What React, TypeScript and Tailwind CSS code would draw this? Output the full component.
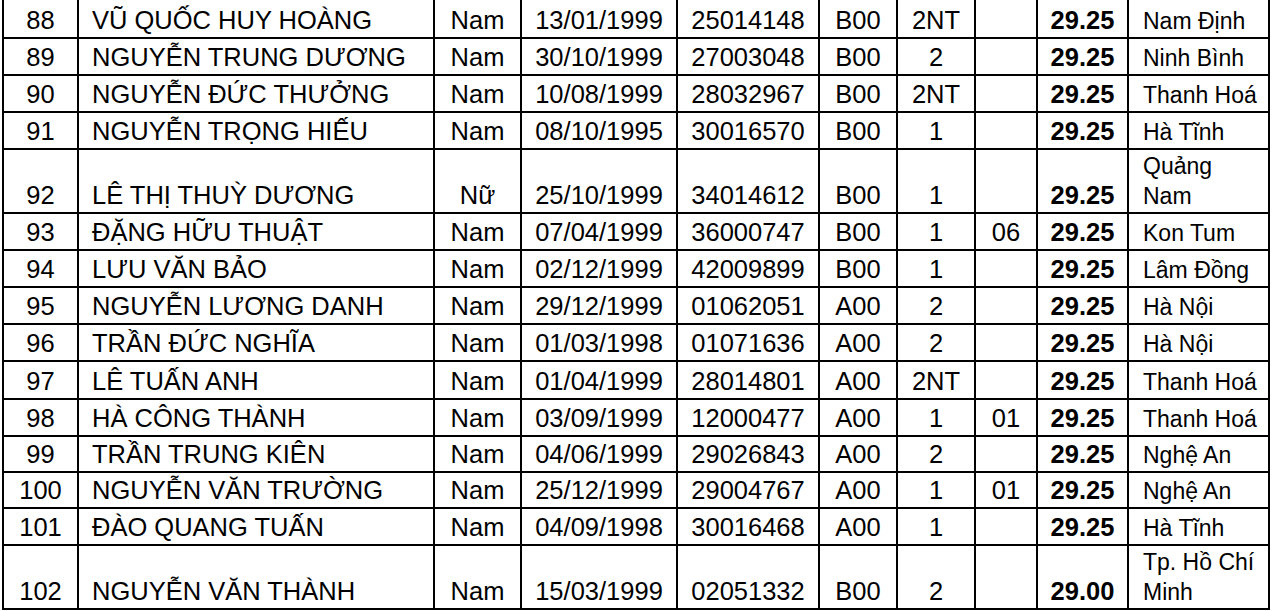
import React from "react";

type Row = {
  h: string;
  cells: string[];
};

const rows: Row[] = [
  { h: "h-[39px]", cells: ["88", "VŨ QUỐC HUY HOÀNG", "Nam", "13/01/1999", "25014148", "B00", "2NT", "", "29.25", "Nam Định"] },
  { h: "h-[37px]", cells: ["89", "NGUYỄN TRUNG DƯƠNG", "Nam", "30/10/1999", "27003048", "B00", "2", "", "29.25", "Ninh Bình"] },
  { h: "h-[37px]", cells: ["90", "NGUYỄN ĐỨC THƯỞNG", "Nam", "10/08/1999", "28032967", "B00", "2NT", "", "29.25", "Thanh Hoá"] },
  { h: "h-[37px]", cells: ["91", "NGUYỄN TRỌNG HIẾU", "Nam", "08/10/1995", "30016570", "B00", "1", "", "29.25", "Hà Tĩnh"] },
  { h: "h-[64px]", cells: ["92", "LÊ THỊ THUỲ DƯƠNG", "Nữ", "25/10/1999", "34014612", "B00", "1", "", "29.25", "Quảng Nam"] },
  { h: "h-[37px]", cells: ["93", "ĐẶNG HỮU THUẬT", "Nam", "07/04/1999", "36000747", "B00", "1", "06", "29.25", "Kon Tum"] },
  { h: "h-[37px]", cells: ["94", "LƯU VĂN BẢO", "Nam", "02/12/1999", "42009899", "B00", "1", "", "29.25", "Lâm Đồng"] },
  { h: "h-[37px]", cells: ["95", "NGUYỄN LƯƠNG DANH", "Nam", "29/12/1999", "01062051", "A00", "2", "", "29.25", "Hà Nội"] },
  { h: "h-[37px]", cells: ["96", "TRẦN ĐỨC NGHĨA", "Nam", "01/03/1998", "01071636", "A00", "2", "", "29.25", "Hà Nội"] },
  { h: "h-[38px]", cells: ["97", "LÊ TUẤN ANH", "Nam", "01/04/1999", "28014801", "A00", "2NT", "", "29.25", "Thanh Hoá"] },
  { h: "h-[37px]", cells: ["98", "HÀ CÔNG THÀNH", "Nam", "03/09/1999", "12000477", "A00", "1", "01", "29.25", "Thanh Hoá"] },
  { h: "h-[36px]", cells: ["99", "TRẦN TRUNG KIÊN", "Nam", "04/06/1999", "29026843", "A00", "2", "", "29.25", "Nghệ An"] },
  { h: "h-[36px]", cells: ["100", "NGUYỄN VĂN TRƯỜNG", "Nam", "25/12/1999", "29004767", "A00", "1", "01", "29.25", "Nghệ An"] },
  { h: "h-[37px]", cells: ["101", "ĐÀO QUANG TUẤN", "Nam", "04/09/1998", "30016468", "A00", "1", "", "29.25", "Hà Tĩnh"] },
  { h: "h-[64px]", cells: ["102", "NGUYỄN VĂN THÀNH", "Nam", "15/03/1999", "02051332", "B00", "2", "", "29.00", "Tp. Hồ Chí Minh"] },
];

const cellAlign = [
  "justify-center text-[25.5px] leading-[27px] pb-[3px]",
  "justify-start pl-[13px] text-[25.5px] leading-[27px] pb-[3px]",
  "justify-center text-[25.5px] leading-[27px] pb-[3px]",
  "justify-center text-[25.5px] leading-[27px] pb-[3px]",
  "justify-center text-[25.5px] leading-[27px] pb-[3px]",
  "justify-center text-[25.5px] leading-[27px] pb-[3px]",
  "justify-center text-[25.5px] leading-[27px] pb-[3px]",
  "justify-center text-[25.5px] leading-[27px] pb-[3px]",
  "justify-center font-bold text-[25.5px] leading-[27px] pb-[3px]",
  "justify-start pl-[14px] pr-[4px] text-[23px] leading-[30px] pb-[1px]",
];

export default function App() {
  return (
    <div className="min-h-[611px] w-[1272px] bg-white text-black" style={{ fontFamily: '"Liberation Sans", Arial, sans-serif' }}>
      <div className="ml-[2px] w-[1268px] border-l-2 border-black">
        {rows.map((r, i) => (
          <div
            key={i}
            className={`grid grid-cols-[75px_356px_87px_156px_142px_78px_78px_62px_91px_141px] ${r.h}`}
          >
            {r.cells.map((c, j) => (
              <div
                key={j}
                className={`flex items-end overflow-hidden border-r-2 border-b-2 border-black ${cellAlign[j]}`}
              >
                <span className="block">{c}</span>
              </div>
            ))}
          </div>
        ))}
      </div>
    </div>
  );
}
